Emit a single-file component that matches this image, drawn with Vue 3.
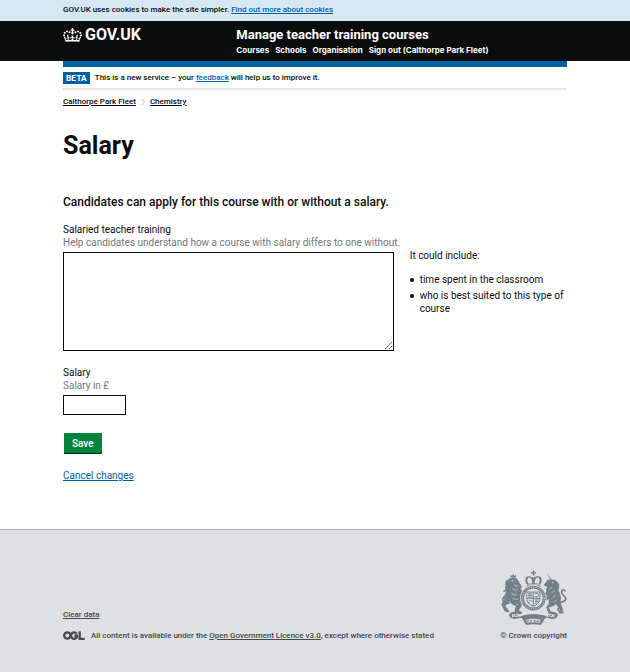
<script setup>
import { ref } from 'vue'

const description = ref('')
const salary = ref('')
const navigation = ['Courses', 'Schools', 'Organisation', 'Sign out (Calthorpe Park Fleet)']
const suggestions = ['time spent in the classroom', 'who is best suited to this type of course']
</script>

<template>
  <div class="page">
    <div class="cookie-banner">
      <p class="container">
        GOV.UK uses cookies to make the site simpler.
        <a href="#cookies">Find out more about cookies</a>
      </p>
    </div>

    <header class="header">
      <div class="container header-grid">
        <a class="logo" href="#home">
          <svg class="crown" viewBox="0 0 132 97" aria-hidden="true">
            <path d="M25 30.2c3.5 1.5 7.7-.2 9.1-3.7 1.5-3.6-.2-7.8-3.9-9.2-3.6-1.4-7.6.3-9.1 3.9-1.4 3.5.3 7.5 3.9 9zM9 39.5c3.6 1.5 7.8-.2 9.2-3.7 1.5-3.6-.2-7.8-3.9-9.1-3.6-1.5-7.6.2-9.1 3.8-1.4 3.5.3 7.5 3.8 9zM4.4 57.2c3.5 1.5 7.7-.2 9.1-3.8 1.5-3.6-.2-7.7-3.9-9.1-3.5-1.5-7.6.3-9.1 3.8-1.4 3.5.3 7.6 3.9 9.1zm38.3-21.4c3.5 1.5 7.7-.2 9.1-3.8 1.5-3.6-.2-7.7-3.9-9.1-3.6-1.5-7.6.3-9.1 3.8-1.3 3.6.4 7.7 3.9 9.1zm64.4-5.6c-3.6 1.5-7.8-.2-9.1-3.7-1.5-3.6.2-7.8 3.8-9.2 3.6-1.4 7.7.3 9.2 3.9 1.3 3.5-.4 7.5-3.9 9zm15.9 9.3c-3.6 1.5-7.7-.2-9.1-3.7-1.5-3.6.2-7.8 3.7-9.1 3.6-1.5 7.7.2 9.2 3.8 1.5 3.5-.3 7.5-3.8 9zm4.7 17.7c-3.6 1.5-7.8-.2-9.2-3.8-1.5-3.6.2-7.7 3.9-9.1 3.6-1.5 7.7.3 9.2 3.8 1.3 3.5-.4 7.6-3.9 9.1zM89.3 35.8c-3.6 1.5-7.8-.2-9.2-3.8-1.4-3.6.2-7.7 3.9-9.1 3.6-1.5 7.7.3 9.2 3.8 1.4 3.6-.3 7.7-3.9 9.1zM69.7 17.7l8.9 4.7V9.3l-8.9 2.8c-.2-.3-.5-.6-.9-.9L72.4 0H59.6l3.5 11.2c-.3.3-.6.5-.9.9l-8.8-2.8v13.1l8.8-4.7c.3.3.6.7.9.9l-5 15.4v.1c-.2.8-.4 1.6-.4 2.4 0 4.1 3.1 7.5 7 8.1h.2c.3 0 .7.1 1 .1.4 0 .7 0 1-.1h.2c4-.6 7.1-4.1 7.1-8.1 0-.8-.1-1.7-.4-2.4V34l-5.1-15.4c.4-.2.7-.6 1-.9zM66 92.8c16.9 0 32.8 1.1 47.1 3.2 4-16.9 8.9-26.7 14-33.5l-9.6-3.4c1 4.9 1.1 7.2 0 10.2-1.5-1.4-3-4.3-4.2-8.7L108.6 76c2.8-2 5-3.2 7.5-3.3-4.4 9.4-10 11.9-13.6 11.2-4.3-.8-6.3-4.6-5.6-7.9 1-4.7 5.7-5.9 8-.5 4.3-8.7-3-11.4-7.6-8.8 7.1-7.2 7.9-13.5 2.1-21.1-8 6.1-8.1 12.3-4.5 20.8-4.7-5.4-12.1-2.5-9.5 6.2 3.4-5.2 7.9-2 7.2 3.1-.6 4.3-6.4 7.8-13.5 7.2-10.3-.9-10.9-8-11.2-13.8 2.5-.5 7.1 1.8 11 7.3L80.2 60c-4.1 4.4-8 5.3-12.3 5.4 1.4-4.4 8-11.6 8-11.6H55.5s6.4 7.2 7.9 11.6c-4.2-.1-8-1-12.3-5.4l1.4 16.4c3.9-5.5 8.5-7.7 10.9-7.3-.3 5.8-.9 12.8-11.1 13.8-7.2.6-12.9-2.9-13.5-7.2-.7-5 3.8-8.3 7.1-3.1 2.7-8.7-4.6-11.6-9.4-6.2 3.7-8.5 3.6-14.7-4.6-20.8-5.8 7.6-5 13.9 2.2 21.1-4.7-2.6-11.9.1-7.7 8.8 2.3-5.5 7.1-4.2 8.1.5.7 3.3-1.3 7.1-5.7 7.9-3.5.7-9-1.8-13.5-11.2 2.5.1 4.7 1.3 7.5 3.3l-4.7-15.4c-1.2 4.4-2.7 7.2-4.3 8.7-1.1-3-.9-5.3 0-10.2l-9.5 3.4c5 6.9 9.9 16.7 14 33.5 14.8-2.1 30.8-3.2 47.7-3.2z" />
          </svg>
          <span>GOV.UK</span>
        </a>
        <div>
          <a class="service-name" href="#service">Manage teacher training courses</a>
          <nav class="navigation" aria-label="Main">
            <a v-for="item in navigation" :key="item" href="#nav">{{ item }}</a>
          </nav>
        </div>
      </div>
    </header>

    <div class="container body">
      <div class="phase-banner">
        <strong class="tag">BETA</strong>
        <span>This is a new service – your <a href="#feedback">feedback</a> will help us to improve it.</span>
      </div>

      <nav class="breadcrumbs" aria-label="Breadcrumb">
        <a href="#organisation">Calthorpe Park Fleet</a>
        <svg class="chevron" viewBox="0 0 4 8" aria-hidden="true"><path d="M.5 1l3 3-3 3" /></svg>
        <a href="#course">Chemistry</a>
      </nav>

      <main>
        <h1>Salary</h1>
        <h2>Candidates can apply for this course with or without a salary.</h2>
        <form @submit.prevent>
          <div class="columns">
            <div class="field">
              <label for="description">Salaried teacher training</label>
              <span id="description-hint" class="hint">Help candidates understand how a course with salary differs to one without.</span>
              <textarea id="description" v-model="description" aria-describedby="description-hint"></textarea>
            </div>
            <aside class="guidance">
              <p>It could include:</p>
              <ul>
                <li v-for="item in suggestions" :key="item">{{ item }}</li>
              </ul>
            </aside>
          </div>
          <div class="field salary-field">
            <label for="salary">Salary</label>
            <span id="salary-hint" class="hint">Salary in £</span>
            <input id="salary" v-model="salary" type="text" aria-describedby="salary-hint" />
          </div>
          <button type="submit">Save</button>
          <p class="cancel"><a href="#cancel">Cancel changes</a></p>
        </form>
      </main>
    </div>

    <footer class="footer">
      <div class="container footer-row">
        <div class="footer-meta">
          <a href="#clear">Clear data</a>
          <div class="licence">
            <svg class="ogl" viewBox="0 0 66 27" aria-hidden="true">
              <circle cx="13" cy="13.500" r="9.500" />
              <path d="M41 8a9.500 9.500 0 1 0 .5 11V14H34M50 1v22.500H65" />
            </svg>
            <span>All content is available under the <a href="#licence">Open Government Licence v3.0</a>, except where otherwise stated</span>
          </div>
        </div>
        <a class="copyright" href="#copyright">
          <svg class="crest" viewBox="15 14 200 168" aria-hidden="true">
            <g class="ink">
              <!-- crown -->
              <path d="M111 15h5v5h5v4h-5v6h-5v-6h-5v-4h5zM93 57c-7-13-6-24 6-25 6-1 11 2 14 5 4-3 9-6 15-5 12 1 13 12 6 25zM93 59h41v6H93z" />
              <!-- lion -->
              <path d="M44 27l4 4 4-6 4 6 5-4-1 9H44z" />
              <path d="M42 39c8-5 20-3 24 4 3 6 5 10 9 15 4 5 3 10-1 12 7 8 8 14 8 21l6 7-3 7-9-4c1 8 3 13 2 19-1 8-7 10-9 15l9 6c1 5-2 7-7 7l-12-4c-4-7-2-15 2-22-10-2-17-7-20-14-3 7-8 11-13 14l10 14-2 5-10-3-10-20c1-5 5-9 9-14-1-10 2-18 6-27-4-4-5-10-2-15-2-6-2-14 3-18z" />
              <!-- unicorn -->
              <path d="M152 22l18 21c7-2 13 1 16 7 5 4 7 9 5 16l-2 8c3 9 8 16 8 25l-3 13c6 8 8 15 2 23l10 5-3 5h-14l4-13-12-15c-8 7-15 10-22 9l8 14 10 3-2 5h-14l-9-21 8-12-1-14-10 7-5-6 10-9-2-5-11 3-3-6 15-5c-4-6-1-12 3-16l-8-2c-4-2-3-7 1-9l7-10 9-1z" />
              <!-- motto scroll -->
              <path d="M58 140c-14 0-22 7-17 14 5 8 16 9 28 5 8-3 12 2 14 8 3 5 5 9 9 13 15-3 28-3 43 0 4-4 7-8 9-13 3-6 7-11 15-8 11 4 23 3 27-5 5-7-5-14-18-14l-12 15c-24-11-60-11-84 0z" />
            </g>
            <g class="strokes">
              <path d="M42 113c-14 2-24-4-21-13 4-9 17-12 14-21-3-6-10-4-12 0M190 110c13 2 24-4 20-13-4-8-15-11-11-20 3-6 10-3 11 1M34 130c-5 4-2 10 5 8M187 132c5-8 15-6 13 2-3 7-12 4-13-2" />
            </g>
            <circle class="ground" cx="113" cy="98" r="40" />
            <g class="ground">
              <path d="M97 54c-4-10-2-17 4-18 6 0 9 9 9 18zM117 54c0-9 3-18 9-18 6 1 8 8 4 18zM47 44h6v3h-6zM169 49l5 1-3 3z" />
              <path d="M48 148l22-2 3 7-24 3zM155 146l22 2-1 8-24-3zM91 164c15-4 29-4 44 0l-3 9c-13-2-25-2-38 0z" />
            </g>
            <circle class="band" cx="113" cy="98" r="33" />
            <circle class="ring" cx="113" cy="98" r="33" />
            <g class="detail">
              <path d="M93 80h40v18c0 13-8 19-20 25-12-6-20-12-20-25zM113 80v42M93 99h40M97 85h12M97 90h12M97 95h12M118 85c7-2 12 1 11 5-1 5-8 6-12 4M98 115c2-9 8-13 12-6M118 104h11M118 109h9M118 114h5" />
              <path d="M53 150l4 4 4-6 4 5M158 149l4 5 4-5 5 5M96 171v-5h4M105 171v-5h4M114 166h6M117 166v5M125 171v-5l4 5v-4" />
            </g>
            <path class="light" d="M54 57l6 5 6-2M50 70l8 5 7-2M47 84l9 5 7-2M50 98l9 5 7-2M61 116l7 3M170 65l-8 6M177 77l-9 5M181 90l-9 6M183 104l-9 5" />
          </svg>
          <span>© Crown copyright</span>
        </a>
      </div>
    </footer>
  </div>
</template>

<style>
body { margin: 0; background: #dee0e2; }
</style>

<style scoped>
.page { background: #fff; color: #0b0c0c; font: 400 10px/13px Roboto, Arial, sans-serif; }
.container { width: 80%; margin: 0 auto; }
a { color: #005ea5; text-decoration: underline; }
p, h1, h2, ul { margin: 0; }
.cookie-banner { padding: 4px 0 5px; background: #d5e8f3; font-size: 8px; line-height: 12px; font-weight: 500; }
.header { height: 40px; background: #0b0c0c; }
.header-grid { display: grid; grid-template-columns: 1fr 2fr; gap: 8px; }
.header a { color: #fff; text-decoration: none; }
.logo { display: flex; align-items: center; align-self: start; gap: 3px; padding-top: 5px; font-size: 16px; line-height: 18px; font-weight: 700; }
.crown { width: 19px; height: 14px; fill: #fff; }
.service-name { display: block; padding-top: 5px; font-size: 13px; line-height: 17px; font-weight: 700; }
.navigation { display: flex; gap: 6px; font-family: Inter, Arial, sans-serif; font-size: 8px; line-height: 14px; font-weight: 700; white-space: nowrap; }
.body { padding-bottom: 47px; }
.phase-banner { display: flex; align-items: center; gap: 5px; padding: 4px 0; border-top: 6px solid #005ea5; border-bottom: 2px solid #e6e7e8; font-size: 8px; line-height: 13px; font-weight: 500; }
.tag { padding: 0 3px; background: #005ea5; color: #fff; font-family: Inter, Arial, sans-serif; line-height: 12px; font-weight: 700; }
.breadcrumbs { display: flex; align-items: center; gap: 5px; padding-top: 5px; font-size: 8px; font-weight: 500; }
.breadcrumbs a { color: #0b0c0c; }
.chevron { width: 4px; height: 8px; fill: none; stroke: #bfc1c3; }
h1 { padding-top: 23px; font-size: 25px; line-height: 30px; font-weight: 700; }
h2 { padding: 33px 0 12px; font-size: 12px; line-height: 17px; font-weight: 500; }
.columns { display: grid; grid-template-columns: 2fr 1fr; gap: 8px; }
.columns > * { min-width: 0; }
.field { display: flex; flex-direction: column; align-items: flex-start; }
.hint { color: #6f777b; white-space: nowrap; }
textarea, input { box-sizing: border-box; margin: 3px 0 0; border: 1px solid #0b0c0c; border-radius: 0; background: #fff; font: inherit; }
textarea { width: 100%; height: 99px; }
.guidance { padding: 26px 0 0 8px; }
.guidance ul { padding: 11px 0 0; list-style: none; }
.guidance li { display: flex; gap: 6px; margin-bottom: 3px; }
.guidance li::before { content: ''; flex: none; width: 4px; height: 4px; margin-top: 5px; border-radius: 50%; background: #0b0c0c; }
.salary-field { padding-top: 15px; }
.salary-field input { width: 63px; height: 20px; }
button { display: block; margin: 18px 0 0 1px; padding: 4px 8px 3px; border: 0; border-radius: 0; background: #00823b; box-shadow: 0 1px 0 #003618; color: #fff; font: 500 10px/13px Roboto, Arial, sans-serif; }
.cancel { padding-top: 16px; }
.footer { padding: 40px 0 31px; border-top: 1px solid #a1acb2; background: #dee0e2; color: #454a4d; font-size: 8px; font-weight: 500; }
.footer a { color: #454a4d; }
.footer-row { display: flex; align-items: flex-end; justify-content: space-between; }
.footer-meta { display: flex; flex-direction: column; gap: 8px; }
.licence { display: flex; align-items: center; gap: 6px; }
.ogl { width: 22px; height: 9px; fill: none; stroke: #454a4d; stroke-width: 7; }
.footer .copyright { display: flex; flex-direction: column; align-items: flex-end; gap: 3px; text-decoration: none; }
.crest { width: 66px; height: 56px; }
.ink { fill: #768187; }
.strokes, .band { fill: none; stroke: #768187; stroke-width: 5; }
.band { stroke-width: 9; }
.ground { fill: #dee0e2; }
.detail { fill: none; stroke: #768187; stroke-width: 3; }
.ring { fill: none; stroke: #dee0e2; stroke-width: 3; stroke-dasharray: 3 4; }
.light { fill: none; stroke: #dee0e2; stroke-width: 2; }
</style>
